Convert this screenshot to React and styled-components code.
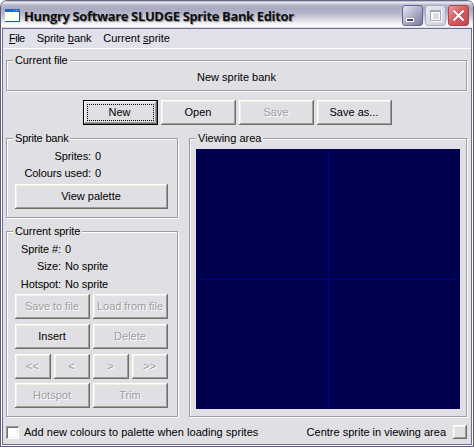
import React from "react";
import styled, { createGlobalStyle, css } from "styled-components";

const Global = createGlobalStyle`
  * { box-sizing: border-box; }
  body { margin: 0; background: #fff; overflow: hidden; }
`;

const FACE = "#e0dfe3";

const Window = styled.div`
  width: 474px;
  height: 447px;
  display: flex;
  flex-direction: column;
  background: #fff;
  border: 1px solid #5d5b77;
  border-top-color: #6a6884;
  border-radius: 7px 7px 0 0;
  overflow: hidden;
  font: 11px/13px "Liberation Sans", Arial, sans-serif;
  color: #000;
  cursor: default;
  user-select: none;
`;

const TitleBar = styled.header`
  height: 27px;
  flex: none;
  display: flex;
  align-items: center;
  padding: 2px 4px 0 4px;
  background: linear-gradient(#8a88a4 0, #f4f4f8 1px, #dcdce6 2px, #b9b9cc 4px, #a9a9c1 7px, #b4b4c9 12px, #d0d0dd 17px, #f0f0f5 22px, #fff 25px, #d4d4e0 27px);
`;

const Title = styled.h1`
  margin: 0 auto 0 4px;
  font: bold 13px/18px "Open Sans", "Noto Sans", sans-serif;
  color: #0e1010;
  text-shadow: 1px 1px 1px #8d8d9d;
  white-space: nowrap;
  width: 272px;
  letter-spacing: -0.36px;
`;

const captionTones = {
  normal: css`background: linear-gradient(135deg, #e8e8f2, #b5b5cc 45%, #77779c); border-color: #5f6690;`,
  disabled: css`background: linear-gradient(135deg, #e9e9f1, #d0d0dd); border-color: #aaaac2;`,
  close: css`background: linear-gradient(135deg, #ee9c9c, #dc5e5e 45%, #c44350); border-color: #a34158;`,
};

const CaptionButton = styled.button`
  width: 21px;
  height: 21px;
  margin-left: 2px;
  padding: 0;
  display: grid;
  place-items: center;
  border: 1px solid;
  border-radius: 3px;
  ${(p) => captionTones[p.$tone]}
`;

const Body = styled.div`
  flex: 1;
  min-height: 0;
  display: flex;
  flex-direction: column;
  margin: 0 1px 1px;
  background: ${FACE};
  border: 1px solid #6e6c8c;
`;

const MenuBar = styled.nav`
  height: 20px;
  flex: none;
  display: flex;
  align-items: center;
  gap: 12px;
  padding: 0 6px;
  background: #e1e1ec;
  border-bottom: 1px solid #fff;
`;

const MenuItem = styled.span`
  letter-spacing: ${(p) => p.$track || 0}px;
`;

const Client = styled.main`
  flex: 1;
  display: flex;
  flex-direction: column;
  padding: 11px 4px 0 3px;
`;

const Group = styled.section`
  width: ${(p) => p.$w}px;
  height: ${(p) => p.$h}px;
  flex: none;
  display: flex;
  flex-direction: column;
  border: 1px solid #9d9da1;
  box-shadow: 1px 1px #fff, inset 1px 1px #fff;
  padding: 0 8px;
`;

const Legend = styled.h2`
  margin: -7px 0 0 -2px;
  align-self: flex-start;
  height: 13px;
  padding: 0 2px;
  background: ${FACE};
  font: inherit;
  letter-spacing: ${(p) => p.$track || 0}px;
`;

const FileName = styled.div`
  margin-top: 4px;
  text-align: center;
`;

const Toolbar = styled.div`
  display: flex;
  gap: 3px;
  margin: 9px 0 13px 77px;
`;

const Button = styled.button`
  width: ${(p) => p.$w || 75}px;
  height: 25px;
  flex: none;
  padding: 0 1px 1px 0;
  border: 0;
  background: ${FACE};
  color: #000;
  font: inherit;
  letter-spacing: ${(p) => p.$track || 0}px;
  white-space: nowrap;
  box-shadow: inset -1px -1px #716f64, inset 1px 1px #fff, inset -2px -2px #9d9da1, inset 2px 2px #f1efe2;
  &:disabled {
    color: #9d9da1;
    text-shadow: 1px 1px #fff;
  }
  ${(p) => p.$focused && css`
    border: 1px solid #000;
    padding: 0 2px 0 0;
    outline: 1px dotted #000;
    outline-offset: -5px;
    box-shadow: inset -1px -1px #716f64, inset 1px 1px #fff, inset -2px -2px #9d9da1;
  `}
`;

const Panels = styled.div`
  display: flex;
  gap: 11px;
`;

const Sidebar = styled.div`
  display: flex;
  flex-direction: column;
  gap: 13px;
`;

const Facts = styled.dl`
  display: grid;
  grid-template-columns: ${(p) => p.$label}px auto;
  grid-template-rows: ${(p) => p.$rows};
  column-gap: 4px;
  margin: ${(p) => p.$top}px 0 0;
  letter-spacing: -0.1px;
  dt { text-align: right; white-space: nowrap; }
  dd { margin: 0; }
`;

const ButtonRow = styled.div`
  display: flex;
  gap: 3px;
  margin-top: ${(p) => p.$top}px;
`;

const Canvas = styled.div`
  flex: none;
  width: 264px;
  height: 260px;
  margin: 4px 0 0 -2px;
  background:
    linear-gradient(#000096, #000096) 132px 0 / 1px 100% no-repeat,
    linear-gradient(#000082, #000082) 0 130px / 100% 1px no-repeat,
    #000050;
`;

const Footer = styled.footer`
  display: flex;
  align-items: center;
  height: 14px;
  margin-top: 8px;
`;

const Checkbox = styled.span`
  width: 13px;
  height: 13px;
  margin-right: 5px;
  background: #fff;
  box-shadow: inset 1px 1px #9d9da1, inset -1px -1px #fff, inset 2px 2px #716f64, inset -2px -2px #f1efe2;
`;

const FooterText = styled.span`
  letter-spacing: ${(p) => p.$track}px;
  margin-left: ${(p) => (p.$end ? "auto" : 0)};
`;

const CentreButton = styled(Button)`
  width: 14px;
  height: 14px;
  margin-left: 7px;
`;

export default function App() {
  return (
    <>
      <Global />
      <Window>
        <TitleBar>
          <svg width="15" height="14" viewBox="0 0 15 14" shapeRendering="crispEdges">
            <path d="M0 1h15v12H0z" fill="#168" />
            <path d="M0 0h15v3H0z" fill="#1769d2" />
            <path d="M0 3h14v9H0z" fill="#fffff4" />
            <path d="M9 1h1v1H9zM11 1h1v1h-1z" fill="#9cf" />
            <path d="M13 1h1v1h-1z" fill="#e65a32" />
          </svg>
          <Title>Hungry Software SLUDGE Sprite Bank Editor</Title>
          <CaptionButton $tone="normal" aria-label="Minimize">
            <svg width="19" height="19" shapeRendering="crispEdges">
              <path d="M3 12h8v4H3z" fill="#fff" />
              <path d="M4 13h6v2H4z" fill="#454568" />
            </svg>
          </CaptionButton>
          <CaptionButton $tone="disabled" aria-label="Maximize">
            <svg width="19" height="19" shapeRendering="crispEdges">
              <path d="M5 5h9v9H5z" fill="none" stroke="#fff" strokeWidth="3" />
              <path d="M4.500 4.500h10v10h-10zM5 5.500h9" fill="none" stroke="#a5a5b4" />
            </svg>
          </CaptionButton>
          <CaptionButton $tone="close" aria-label="Close">
            <svg width="19" height="19">
              <path d="M4.500 4.500l10 10M14.500 4.500l-10 10" stroke="#b04450" strokeWidth="3.500" />
              <path d="M4.500 4.500l10 10M14.500 4.500l-10 10" stroke="#fff" strokeWidth="2.300" />
            </svg>
          </CaptionButton>
        </TitleBar>
        <Body>
          <MenuBar>
            <MenuItem $track={-0.5}><u>F</u>ile</MenuItem>
            <MenuItem $track={-0.1}>Sprite <u>b</u>ank</MenuItem>
            <MenuItem>Current <u>s</u>prite</MenuItem>
          </MenuBar>
          <Client>
            <Group $w={461} $h={31}>
              <Legend $track={-0.1}>Current file</Legend>
              <FileName>New sprite bank</FileName>
            </Group>
            <Toolbar>
              <Button $focused>New</Button>
              <Button>Open</Button>
              <Button disabled>Save</Button>
              <Button>Save as...</Button>
            </Toolbar>
            <Panels>
              <Sidebar>
                <Group $w={172} $h={80}>
                  <Legend $track={-0.2}>Sprite bank</Legend>
                  <Facts $label={76} $rows="17px 17px" $top={5}>
                    <dt>Sprites:</dt><dd>0</dd>
                    <dt>Colours used:</dt><dd>0</dd>
                  </Facts>
                  <ButtonRow $top={0}><Button $w={153}>View palette</Button></ButtonRow>
                </Group>
                <Group $w={172} $h={186}>
                  <Legend $track={-0.1}>Current sprite</Legend>
                  <Facts $label={46} $rows="17px 18px 17px" $top={5}>
                    <dt>Sprite #:</dt><dd>0</dd>
                    <dt>Size:</dt><dd>No sprite</dd>
                    <dt>Hotspot:</dt><dd>No sprite</dd>
                  </Facts>
                  <ButtonRow $top={-1}>
                    <Button $track={-0.05} disabled>Save to file</Button>
                    <Button $track={-0.05} disabled>Load from file</Button>
                  </ButtonRow>
                  <ButtonRow $top={5}>
                    <Button>Insert</Button>
                    <Button disabled>Delete</Button>
                  </ButtonRow>
                  <ButtonRow $top={5}>
                    <Button $w={36} disabled>&lt;&lt;</Button>
                    <Button $w={36} disabled>&lt;</Button>
                    <Button $w={36} disabled>&gt;</Button>
                    <Button $w={36} disabled>&gt;&gt;</Button>
                  </ButtonRow>
                  <ButtonRow $top={4}>
                    <Button disabled>Hotspot</Button>
                    <Button disabled>Trim</Button>
                  </ButtonRow>
                </Group>
              </Sidebar>
              <Group $w={278} $h={279}>
                <Legend>Viewing area</Legend>
                <Canvas />
              </Group>
            </Panels>
            <Footer>
              <Checkbox role="checkbox" aria-checked="false" />
              <FooterText $track={0.03}>Add new colours to palette when loading sprites</FooterText>
              <FooterText $track={0} $end>Centre sprite in viewing area</FooterText>
              <CentreButton aria-label="Centre sprite in viewing area" />
            </Footer>
          </Client>
        </Body>
      </Window>
    </>
  );
}
